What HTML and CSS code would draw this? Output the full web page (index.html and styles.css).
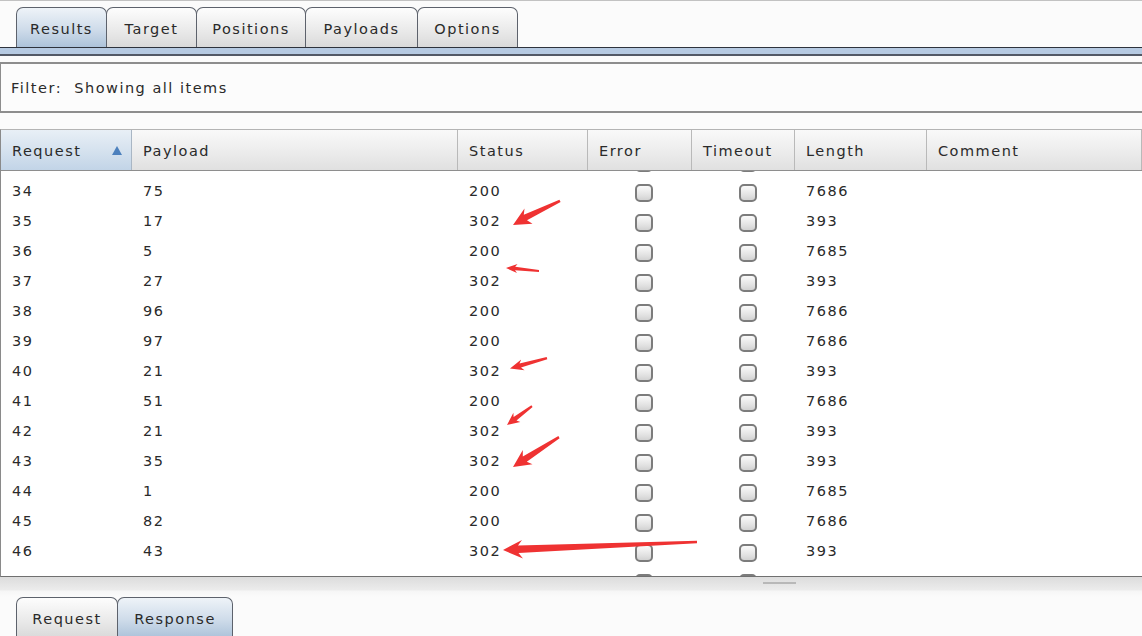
FILE: index.html
```html
<!DOCTYPE html>
<html>
<head>
<meta charset="utf-8">
<link rel="stylesheet" href="styles.css">
</head>
<body>
<div class="app">
  <div class="topline"></div>
  <div class="tabbar">
    <div class="tab active w-results">Results</div>
    <div class="tab w-target">Target</div>
    <div class="tab w-positions">Positions</div>
    <div class="tab w-payloads">Payloads</div>
    <div class="tab w-options">Options</div>
  </div>
  <div class="tabstrip"></div>
  <div class="filter">Filter:&nbsp; Showing all items</div>
  <div class="table">
    <div class="thead">
      <div class="th sorted">Request<span class="sort"></span></div>
      <div class="th">Payload</div>
      <div class="th">Status</div>
      <div class="th">Error</div>
      <div class="th">Timeout</div>
      <div class="th">Length</div>
      <div class="th">Comment</div>
    </div>
    <div class="tbody">
      <div class="rows">
        <div class="row"><div class="td"></div><div class="td"></div><div class="td"></div><div class="td cb"><span class="check"></span></div><div class="td cb"><span class="check"></span></div><div class="td"></div><div class="td"></div></div>
        <div class="row"><div class="td">34</div><div class="td">75</div><div class="td">200</div><div class="td cb"><span class="check"></span></div><div class="td cb"><span class="check"></span></div><div class="td">7686</div><div class="td"></div></div>
        <div class="row"><div class="td">35</div><div class="td">17</div><div class="td">302</div><div class="td cb"><span class="check"></span></div><div class="td cb"><span class="check"></span></div><div class="td">393</div><div class="td"></div></div>
        <div class="row"><div class="td">36</div><div class="td">5</div><div class="td">200</div><div class="td cb"><span class="check"></span></div><div class="td cb"><span class="check"></span></div><div class="td">7685</div><div class="td"></div></div>
        <div class="row"><div class="td">37</div><div class="td">27</div><div class="td">302</div><div class="td cb"><span class="check"></span></div><div class="td cb"><span class="check"></span></div><div class="td">393</div><div class="td"></div></div>
        <div class="row"><div class="td">38</div><div class="td">96</div><div class="td">200</div><div class="td cb"><span class="check"></span></div><div class="td cb"><span class="check"></span></div><div class="td">7686</div><div class="td"></div></div>
        <div class="row"><div class="td">39</div><div class="td">97</div><div class="td">200</div><div class="td cb"><span class="check"></span></div><div class="td cb"><span class="check"></span></div><div class="td">7686</div><div class="td"></div></div>
        <div class="row"><div class="td">40</div><div class="td">21</div><div class="td">302</div><div class="td cb"><span class="check"></span></div><div class="td cb"><span class="check"></span></div><div class="td">393</div><div class="td"></div></div>
        <div class="row"><div class="td">41</div><div class="td">51</div><div class="td">200</div><div class="td cb"><span class="check"></span></div><div class="td cb"><span class="check"></span></div><div class="td">7686</div><div class="td"></div></div>
        <div class="row"><div class="td">42</div><div class="td">21</div><div class="td">302</div><div class="td cb"><span class="check"></span></div><div class="td cb"><span class="check"></span></div><div class="td">393</div><div class="td"></div></div>
        <div class="row"><div class="td">43</div><div class="td">35</div><div class="td">302</div><div class="td cb"><span class="check"></span></div><div class="td cb"><span class="check"></span></div><div class="td">393</div><div class="td"></div></div>
        <div class="row"><div class="td">44</div><div class="td">1</div><div class="td">200</div><div class="td cb"><span class="check"></span></div><div class="td cb"><span class="check"></span></div><div class="td">7685</div><div class="td"></div></div>
        <div class="row"><div class="td">45</div><div class="td">82</div><div class="td">200</div><div class="td cb"><span class="check"></span></div><div class="td cb"><span class="check"></span></div><div class="td">7686</div><div class="td"></div></div>
        <div class="row"><div class="td">46</div><div class="td">43</div><div class="td">302</div><div class="td cb"><span class="check"></span></div><div class="td cb"><span class="check"></span></div><div class="td">393</div><div class="td"></div></div>
        <div class="row"><div class="td">47</div><div class="td">50</div><div class="td">200</div><div class="td cb"><span class="check"></span></div><div class="td cb"><span class="check"></span></div><div class="td">7686</div><div class="td"></div></div>
      </div>
    </div>
  </div>
  <div class="divider"><span class="grip"></span></div>
  <div class="subtabs">
    <div class="tab w-request">Request</div>
    <div class="tab active w-response">Response</div>
  </div>
  <svg class="arrows" width="1142" height="636" viewBox="0 0 1142 636">
    <g fill="#ef3232">
      <polygon points="513,225 532.5,223.8 527,220.2 560.6,202 559.4,199.8 523.8,214.8 524.5,208.5"/>
      <polygon points="506,268 517,273 515,270.2 539,272 539,270 515.2,266.8 517.5,264"/>
      <polygon points="510,368.5 524.5,370.3 521,367.4 547.3,359.3 546.7,356.9 519.5,363.5 521.2,359.5"/>
      <polygon points="507,425 520.3,422 516.5,420.5 532.6,407 531.4,405.2 513.6,417 513.4,412.8"/>
      <polygon points="513,467 532.5,464.2 526.8,461.8 559.6,438.2 558.4,436 522.8,456.5 522.8,450"/>
      <polygon points="503,550 523,558.5 518.5,553 697,543.2 697,540.8 518,545.6 522,540"/>
    </g>
  </svg>
</div>
</body>
</html>
```
FILE: styles.css
```css
html, body {
  margin: 0;
  padding: 0;
}
body {
  width: 1142px;
  height: 636px;
  overflow: hidden;
  background: #fbfbfb;
  font-family: "DejaVu Sans", "Liberation Sans", sans-serif;
  font-size: 14.5px;
  letter-spacing: 1.5px;
  color: #2a2a2a;
}
.app {
  position: relative;
  width: 1142px;
  height: 636px;
  overflow: hidden;
}
.topline {
  height: 1px;
  background: #c2c2c2;
}
.tabbar {
  display: flex;
  align-items: flex-end;
  padding: 6px 0 0 16px;
  height: 40px;
}
.tab {
  box-sizing: border-box;
  height: 40px;
  display: flex;
  align-items: center;
  justify-content: center;
  border: 1px solid #5d626c;
  border-bottom: none;
  border-radius: 7px 7px 0 0;
  background: linear-gradient(#fdfdfd, #e9e9e9 60%, #dadada);
  margin-left: -1px;
  padding-top: 2px;
}
.tab.active {
  background: linear-gradient(#eef3f8, #cfdcea 55%, #adc3da);
}
.w-results { width: 91px; margin-left: 0; }
.w-target { width: 91px; }
.w-positions { width: 110px; }
.w-payloads { width: 113px; }
.w-options { width: 101px; }
.w-request { width: 102px; margin-left: 0; }
.w-response { width: 116px; }

.tabstrip {
  height: 6px;
  border-top: 1px solid #2e333c;
  border-bottom: 2px solid #535966;
  background: #b6cae2;
}
.filter {
  margin-top: 6px;
  height: 47px;
  border-top: 2px solid #8d8d8d;
  border-bottom: 2px solid #8d8d8d;
  border-left: 1px solid #8d8d8d;
  background: #fcfcfc;
  display: flex;
  align-items: center;
  padding-left: 10px;
}
.table {
  margin-top: 16px;
  border-top: 1px solid #b4b4b4;
  border-left: 1px solid #8a8a8a;
  border-bottom: 1px solid #707070;
  background: #ffffff;
}
.thead,
.row {
  display: grid;
  grid-template-columns: 131px 326px 130px 104px 103px 132px 1fr;
}
.thead {
  height: 40px;
  border-bottom: 1px solid #8e8e8e;
  background: linear-gradient(#f9f9f9, #ececec 55%, #e0e0e0);
}
.th {
  position: relative;
  display: flex;
  align-items: center;
  padding-left: 11px;
  padding-top: 1px;
  border-right: 1px solid #b9b9b9;
}
.th.sorted {
  background: linear-gradient(#e8eff6, #d4e1ee 55%, #c2d4e7);
  border-right-color: #a9b6c4;
}
.sort {
  position: absolute;
  right: 9px;
  top: 16px;
  width: 0;
  height: 0;
  border-left: 5px solid transparent;
  border-right: 5px solid transparent;
  border-bottom: 9px solid #4c80bd;
}
.tbody {
  height: 405px;
  overflow: hidden;
}
.rows {
  margin-top: -25px;
}
.row {
  height: 30px;
}
.td {
  display: flex;
  align-items: center;
  padding-left: 11px;
}
.td.cb {
  justify-content: center;
  padding-left: 8px;
  padding-top: 3px;
}
.check {
  box-sizing: border-box;
  width: 18px;
  height: 18px;
  border: 2px solid #7c7c7c;
  border-radius: 5px;
  background: linear-gradient(#fafafa, #e4e4e4 60%, #d2d2d2);
}
.divider {
  position: relative;
  height: 20px;
  background: linear-gradient(#dcdcdc, #ececec 65%, #f6f6f6 70%, #fbfbfb);
}
.grip {
  position: absolute;
  left: 763px;
  top: 5px;
  width: 33px;
  height: 2px;
  background: #b8b8b8;
}
.subtabs {
  display: flex;
  padding-left: 16px;
}
.arrows {
  position: absolute;
  left: 0;
  top: 0;
  pointer-events: none;
}
```
